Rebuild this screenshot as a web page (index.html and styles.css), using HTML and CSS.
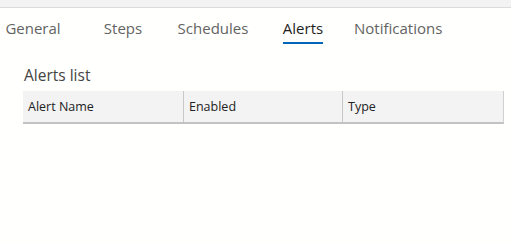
FILE: index.html
```html
<!DOCTYPE html>
<html lang="en">
<head>
    <meta charset="UTF-8">
    <title>Job Properties</title>
    <link rel="stylesheet" href="styles.css">
</head>
<body>

<div class="top-strip"></div>

<div class="tab-list">
    <div class="tab"><span>General</span></div>
    <div class="tab"><span>Steps</span></div>
    <div class="tab"><span>Schedules</span></div>
    <div class="tab active"><span>Alerts</span></div>
    <div class="tab"><span>Notifications</span></div>
</div>

<div class="panel">
    <h3>Alerts list</h3>
    <div class="grid-header">
        <div class="col">Alert Name</div>
        <div class="col">Enabled</div>
        <div class="col">Type</div>
    </div>
</div>

</body>
</html>
```

FILE: styles.css
```css
body {
    margin: 0;
    font-family: "Open Sans", "Noto Sans", sans-serif;
    background-color: #fffffd;
    color: #333;
}
.top-strip {
    height: 7px;
    background-color: #f3f3f3;
    border-bottom: 1px solid #dcdcdc;
}
.tab-list {
    display: flex;
    margin-left: -12px;
    margin-top: 9px;
}
.tab {
    min-width: 90px;
    padding: 0 6px;
    box-sizing: border-box;
    text-align: center;
    font-size: 15px;
    color: #636363;
}
.tab span {
    display: inline-block;
    line-height: 22px;
    padding-bottom: 3px;
    border-bottom: 2px solid transparent;
}
.tab.active span {
    color: #1e1e1e;
    border-bottom-color: #0067b8;
}
.panel {
    padding: 0 8px 0 23px;
}
h3 {
    margin: 20px 0 5px 1px;
    font-size: 15.5px;
    font-weight: normal;
    color: #444;
}
.grid-header {
    display: grid;
    grid-template-columns: 161px 159px 160px;
    background-color: #f3f3f4;
    border-bottom: 2px solid #c2c2c2;
    border-right: 1px solid #d0d0d0;
    width: 480px;
}
.col {
    height: 31px;
    line-height: 31px;
    padding-left: 5px;
    font-size: 12.5px;
    color: #222;
    border-right: 1px solid #c8c8c8;
}
.col:last-child {
    border-right: none;
}
```
